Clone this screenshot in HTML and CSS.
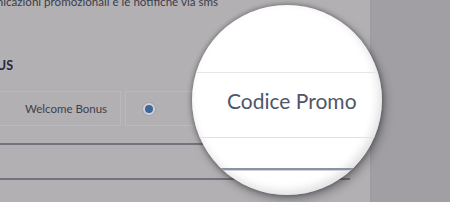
FILE: index.html
```html
<!DOCTYPE html>
<html lang="it">
<head>
<meta charset="utf-8">
<title>Codice Promo</title>
<link rel="stylesheet" href="styles.css">
</head>
<body>
<div class="stage">
  <div class="panel">
    <div class="note"><span>Accetto di ricevere comunicazioni promozionali e le notifiche via sms</span></div>
    <div class="heading"><span>SCEGLI IL TUO BONUS</span></div>
    <div class="bonus-row">
      <div class="cell cell-label">Welcome Bonus</div>
      <div class="cell cell-radio"><span class="radio"></span></div>
    </div>
    <div class="field"></div>
    <div class="field"></div>
  </div>
  <div class="side"></div>
  <div class="lens">
    <div class="lens-top"></div>
    <div class="lens-row">Codice Promo</div>
    <div class="lens-gap"></div>
    <div class="lens-rule"></div>
  </div>
</div>
</body>
</html>
```

FILE: styles.css
```css
html, body {
  margin: 0;
  padding: 0;
}
body {
  width: 450px;
  height: 202px;
  overflow: hidden;
  font-family: Lato, "Liberation Sans", sans-serif;
  background: #a19fa4;
}
.stage {
  position: relative;
  display: flex;
  width: 450px;
  height: 202px;
  overflow: hidden;
}
.panel {
  width: 370px;
  flex: none;
  background: #b3b0b3;
}
.side {
  flex: 1;
  background: #a19fa4;
  border-left: 1px solid #9d9ba1;
}
.note {
  display: flex;
  justify-content: flex-end;
  width: 218px;
  margin-top: -5px;
  height: 13px;
  font-size: 11.6px;
  line-height: 13px;
  color: #3b3d4a;
  white-space: nowrap;
}
.heading {
  display: flex;
  justify-content: flex-end;
  width: 13px;
  margin-top: 51px;
  height: 14px;
  font-size: 12.5px;
  line-height: 14px;
  font-weight: 700;
  color: #232839;
  white-space: nowrap;
}
.bonus-row {
  display: flex;
  gap: 4px;
  margin-top: 18px;
  height: 35px;
}
.cell {
  display: flex;
  align-items: center;
  box-sizing: border-box;
  height: 35px;
  border: 1px solid #bcb9bc;
}
.cell-label {
  width: 121px;
  border-left: none;
  padding-left: 25px;
  font-size: 11.5px;
  color: #3d3f4e;
}
.cell-radio {
  width: 120px;
  padding-left: 17px;
}
.radio {
  display: block;
  box-sizing: border-box;
  width: 12px;
  height: 12px;
  border-radius: 50%;
  background: #3d6799;
  border: 2.5px solid #d2d0d5;
  box-shadow: 0 0 0 1px #a6a4aa;
}
.field {
  width: 350px;
  height: 33px;
  border-top: 2px solid #75727d;
  margin-top: 17px;
}
.field + .field {
  margin-top: 0;
}
.lens {
  position: absolute;
  left: 192px;
  top: 5px;
  width: 190px;
  height: 190px;
  border-radius: 50%;
  overflow: hidden;
  background: radial-gradient(circle at 45% 42%, #ffffff 0%, #ffffff 80%, #f3f3f4 92%, #e0e0e3 100%);
  box-shadow: inset -3px -4px 8px rgba(60, 60, 70, 0.16), 0 0 4px 1px rgba(40, 38, 45, 0.4), 3px 5px 10px rgba(30, 28, 35, 0.35);
}
.lens-top {
  height: 67px;
  border-bottom: 1px solid #e6e6e8;
}
.lens-row {
  box-sizing: border-box;
  height: 65px;
  padding-top: 15px;
  padding-left: 35px;
  font-size: 21px;
  line-height: 25px;
  color: #505668;
  border-bottom: 1px solid #e3e3e6;
}
.lens-gap {
  height: 30px;
}
.lens-rule {
  height: 2px;
  background: #8c91a3;
  border-bottom: 1px solid #cfd2da;
}
```
